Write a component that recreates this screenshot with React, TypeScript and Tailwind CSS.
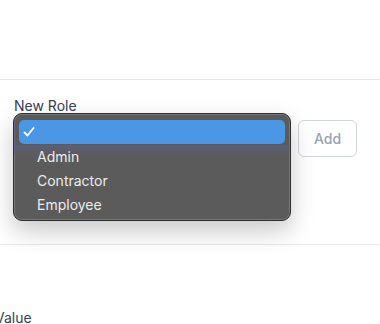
export default function App() {
  const options = ['Admin', 'Contractor', 'Employee'];

  return (
    <div className="w-[380px] h-[324px] overflow-hidden bg-white font-['Inter','Liberation_Sans',sans-serif]">
      <div className="h-[79px]" />

      {/* Role section */}
      <div className="h-[165px] border-t border-gray-200 px-[14px] pt-4">
        <label className="block text-sm leading-5 text-gray-700">New Role</label>
        <div className="mt-1 flex items-start gap-2">
          <div className="relative h-[38px] w-[276px]">
            {/* native select under the open menu */}
            <div className="h-full w-full rounded-md border border-gray-300 bg-white" />

            {/* open popup menu */}
            <div className="absolute -left-px -top-[7px] z-10 h-[108px] w-[278px] overflow-hidden rounded-[9px] border border-[#2e2e2e] bg-[#5b5b5b] shadow-[0_10px_24px_rgba(0,0,0,0.22),inset_0_0_0_1px_rgba(255,255,255,0.18)]">
              <div className="absolute left-0 top-0 h-[40px] w-[2px] bg-[#5a5690]/50" />
              <div className="absolute inset-x-0 top-[31px] h-[10px] bg-gradient-to-b from-[#615f8c]/60 to-transparent" />
              <div className="relative px-[5px] pt-[6px]">
                <div className="flex h-6 items-center rounded-[5px] bg-[#4a97e6] pl-[4px] text-white">
                  <svg width="12" height="12" viewBox="0 0 12 12" fill="none">
                    <path d="M1.5 6.5 L4.5 9.5 L10.5 2" stroke="white" strokeWidth="1.8" strokeLinecap="round" strokeLinejoin="round" />
                  </svg>
                </div>
                <div className="mt-px">
                  {options.map((o) => (
                    <div key={o} className="flex h-6 items-center pl-[18px] text-sm text-[#ececec]">
                      {o}
                    </div>
                  ))}
                </div>
              </div>
            </div>
          </div>
          <button
            type="button"
            className="h-[37px] w-[59px] rounded-md border border-gray-300 bg-white text-sm font-medium text-gray-400"
          >
            Add
          </button>
        </div>
      </div>

      {/* Value section */}
      <div className="border-t border-gray-200 pt-[63px]">
        <label className="-ml-[5px] block text-sm leading-5 text-gray-700">Value</label>
      </div>
    </div>
  );
}
